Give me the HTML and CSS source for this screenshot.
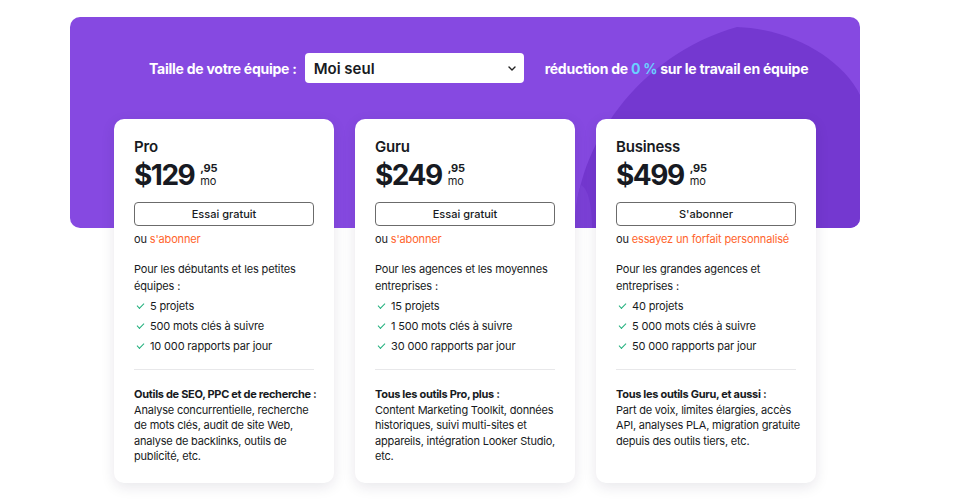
FILE: index.html
```html
<!DOCTYPE html>
<html lang="fr">
<head>
<meta charset="utf-8">
<title>Tarifs</title>
<link rel="stylesheet" href="styles.css">
</head>
<body>
<section class="pricing">
  <div class="banner" aria-hidden="true">
    <svg width="790" height="211" viewBox="0 0 790 211">
      <path d="M667 10 C722 12 772 42 790 78 L790 211 L505 211 C505 130 568 38 667 10 Z" fill="#7438d0"/>
      <path d="M505 211 C505 192 507 178 511 168 C519 172 522 192 522 211 Z" fill="#7b40d6"/>
    </svg>
  </div>
  <div class="team-row">
    <span class="team-label">Taille de votre équipe :</span>
    <div class="select">
      <span>Moi seul</span>
      <svg width="8" height="5" viewBox="0 0 8 5"><path d="M1 1 L4 4 L7 1" fill="none" stroke="#222" stroke-width="1.4" stroke-linecap="round" stroke-linejoin="round"/></svg>
    </div>
    <span class="team-note">réduction de <span class="pct">0 %</span> sur le travail en équipe</span>
  </div>
  <div class="cards">
    <article class="card">
      <h3 class="plan">Pro</h3>
      <div class="price"><span class="amount">$129</span><span class="cents"><b>,95</b><span>mo</span></span></div>
      <button class="btn">Essai gratuit</button>
      <p class="alt">ou <a href="#">s'abonner</a></p>
      <p class="desc">Pour les débutants et les petites équipes :</p>
      <ul class="checks">
        <li>5 projets</li>
        <li>500 mots clés à suivre</li>
        <li>10 000 rapports par jour</li>
      </ul>
      <hr>
      <p class="tools-title">Outils de SEO, PPC et de recherche :</p>
      <p class="tools">Analyse concurrentielle, recherche de mots clés, audit de site Web, analyse de backlinks, outils de publicité, etc.</p>
    </article>
    <article class="card">
      <h3 class="plan">Guru</h3>
      <div class="price"><span class="amount">$249</span><span class="cents"><b>,95</b><span>mo</span></span></div>
      <button class="btn">Essai gratuit</button>
      <p class="alt">ou <a href="#">s'abonner</a></p>
      <p class="desc">Pour les agences et les moyennes entreprises :</p>
      <ul class="checks">
        <li>15 projets</li>
        <li>1 500 mots clés à suivre</li>
        <li>30 000 rapports par jour</li>
      </ul>
      <hr>
      <p class="tools-title">Tous les outils Pro, plus :</p>
      <p class="tools">Content Marketing Toolkit, données historiques, suivi multi-sites et appareils, intégration Looker Studio, etc.</p>
    </article>
    <article class="card">
      <h3 class="plan">Business</h3>
      <div class="price"><span class="amount">$499</span><span class="cents"><b>,95</b><span>mo</span></span></div>
      <button class="btn">S'abonner</button>
      <p class="alt">ou <a href="#">essayez un forfait personnalisé</a></p>
      <p class="desc">Pour les grandes agences et entreprises :</p>
      <ul class="checks">
        <li>40 projets</li>
        <li>5 000 mots clés à suivre</li>
        <li>50 000 rapports par jour</li>
      </ul>
      <hr>
      <p class="tools-title">Tous les outils Guru, et aussi :</p>
      <p class="tools">Part de voix, limites élargies, accès API, analyses PLA, migration gratuite depuis des outils tiers, etc.</p>
    </article>
  </div>
</section>
</body>
</html>
```

FILE: styles.css
```css
* { box-sizing: border-box; }
html, body { margin: 0; background: #fff; }
body {
  font-family: Inter, "Noto Sans", sans-serif;
  color: #171a22;
  width: 960px;
  height: 504px;
  overflow: hidden;
}
.pricing {
  position: relative;
  width: 790px;
  margin: 17px 0 0 70px;
  padding-top: 36px;
}
.banner {
  position: absolute;
  left: 0; top: 0;
  width: 790px; height: 211px;
  background: #8649e1;
  border-radius: 10px;
  overflow: hidden;
  z-index: 0;
}
.banner svg { display: block; }
.team-row {
  position: relative;
  z-index: 1;
  display: flex;
  align-items: center;
  padding-left: 79px;
  height: 30px;
}
.team-label, .team-note {
  color: #fff;
  font-weight: 700;
  font-size: 14px;
  letter-spacing: -0.25px;
}
.team-label { margin-right: 8px; }
.select {
  width: 219px;
  height: 30px;
  background: #fff;
  border-radius: 4px;
  display: flex;
  align-items: center;
  justify-content: space-between;
  padding: 0 8px 0 9px;
  font-size: 15px;
  font-weight: 600;
  color: #171a22;
  margin-right: 21px;
}
.pct { color: #6ad0ff; }
.cards {
  position: relative;
  z-index: 1;
  display: flex;
  gap: 21px;
  padding-left: 44px;
  margin-top: 36px;
}
.card {
  width: 220px;
  height: 364px;
  background: #fff;
  border-radius: 10px;
  box-shadow: 0 4px 14px rgba(30, 20, 60, 0.10);
  padding: 19px 20px 0;
  font-size: 11px;
  letter-spacing: -0.15px;
}
.plan {
  margin: 0;
  font-size: 15px;
  font-weight: 600;
  line-height: 18px;
  letter-spacing: -0.2px;
}
.price {
  display: flex;
  align-items: flex-start;
  margin-top: 3px;
  height: 32px;
}
.amount {
  font-size: 28px;
  font-weight: 700;
  letter-spacing: -1.5px;
  line-height: 32px;
}
.cents {
  display: flex;
  flex-direction: column;
  gap: 3px;
  margin-left: 6px;
  margin-top: 4px;
  font-size: 11px;
}
.cents b { font-weight: 700; line-height: 10px; }
.cents span { line-height: 10px; }
.btn {
  display: block;
  width: 180px;
  height: 24px;
  margin-top: 11px;
  background: #fff;
  border: 1px solid #6b6b6b;
  border-radius: 4px;
  font-family: inherit;
  font-size: 11px;
  font-weight: 500;
  color: #171a22;
  padding: 0;
}
.alt {
  margin: 5px 0 0;
  line-height: 16px;
}
.alt a { color: #ff642d; text-decoration: none; }
.desc {
  margin: 14px 0 0;
  line-height: 17px;
}
.checks {
  list-style: none;
  margin: 1px 0 0;
  padding: 0;
}
.checks li {
  position: relative;
  padding-left: 16px;
  line-height: 20px;
}
.checks li::before {
  content: "";
  position: absolute;
  left: 3px;
  top: 7px;
  width: 6px;
  height: 3px;
  border-left: 1.5px solid #22b07d;
  border-bottom: 1.5px solid #22b07d;
  transform: rotate(-45deg);
}
hr {
  border: 0;
  border-top: 1px solid #e8e8ea;
  margin: 13px 0 0;
}
.tools-title {
  margin: 16px 0 0;
  font-weight: 700;
  line-height: 16px;
  letter-spacing: -0.3px;
  white-space: nowrap;
}
.tools {
  margin: 1px -6px 0 0;
  line-height: 15.3px;
  letter-spacing: -0.2px;
}
```
